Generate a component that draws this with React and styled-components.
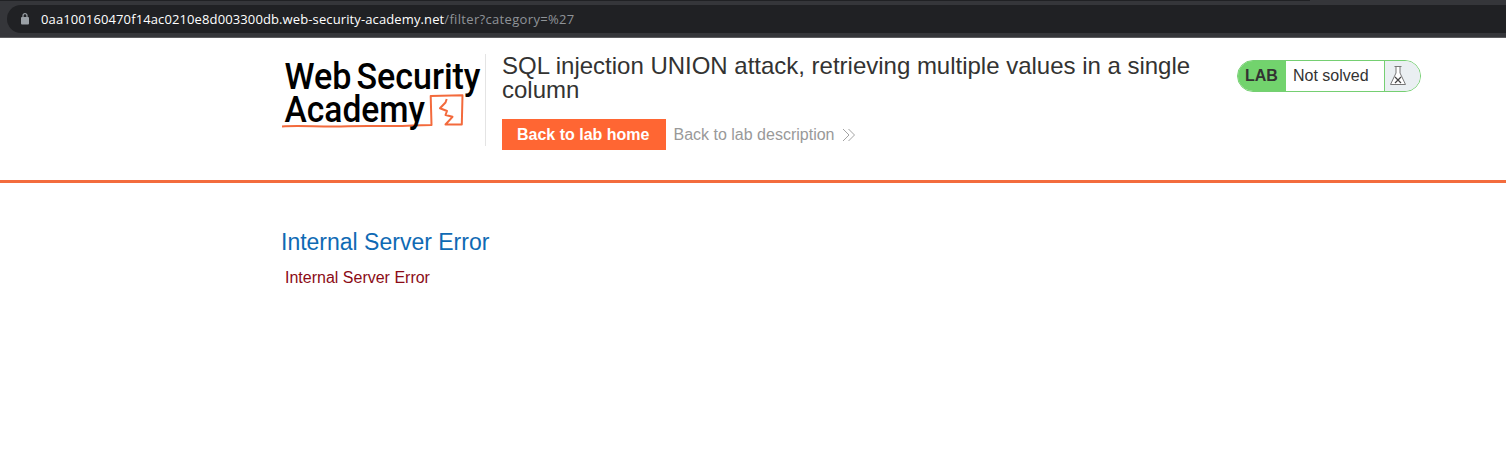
import React from 'react';
import styled, { createGlobalStyle } from 'styled-components';

const GlobalStyle = createGlobalStyle`
  * { box-sizing: border-box; }
  body { margin: 0; background: #fff; font-family: "Liberation Sans", Arial, sans-serif; color: #333332; overflow: hidden; }
  h1, h2, p { margin: 0; font-weight: 400; }
`;

const BrowserBar = styled.div`
  height: 38px;
  padding: 0 0 4px 7px;
  background: #35363a;
  border-bottom: 1px solid #5b5b5e;
`;
const TabEdge = styled.div`
  width: 1310px;
  height: 1px;
  margin: 0 0 4px -7px;
  background: #202124;
`;
const AddressBar = styled.div`
  height: 28px;
  padding-left: 14px;
  display: flex;
  align-items: center;
  background: #202124;
  border-radius: 14px 0 0 14px;
`;
const LockIcon = styled.svg`
  display: block;
  width: 8px;
  height: 12px;
  margin-right: 12px;
`;
const Url = styled.span`
  font-family: "Open Sans", "Noto Sans", sans-serif;
  font-size: 13px;
  line-height: 18px;
  white-space: pre;
  color: ${(p) => (p.$muted ? '#8f9398' : '#fff')};
  letter-spacing: ${(p) => (p.$muted ? '0.33px' : '0.115px')};
`;
const Header = styled.header`
  height: 145px;
  padding: 16px 85px 0 281px;
  display: flex;
  align-items: flex-start;
  border-bottom: 3px solid #f36c3d;
`;
const Logo = styled.svg`
  display: block;
  flex: none;
  width: 204px;
  height: 92px;
  overflow: visible;
`;
const TitleBlock = styled.div`
  height: 92px;
  width: 720px;
  padding-left: 16px;
  border-left: 1px solid #e4e4e4;
`;
const Title = styled.h2`
  font-size: 24px;
  line-height: 24px;
  letter-spacing: -0.01px;
`;
const Actions = styled.div`
  display: flex;
  align-items: center;
  margin-top: 17px;
`;
const HomeButton = styled.a`
  width: 164px;
  height: 31px;
  padding-left: 15px;
  background: #ff6633;
  color: #fff;
  font-size: 16px;
  font-weight: 700;
  line-height: 31px;
`;
const DescriptionLink = styled.a`
  display: flex;
  align-items: center;
  margin-left: 7.5px;
  color: #999;
  font-size: 16px;
  line-height: 31px;
  white-space: nowrap;
`;
const Chevrons = styled.svg`
  width: 14px;
  height: 14px;
  margin-left: 7.5px;
`;
const LabStatus = styled.div`
  width: 184px;
  height: 32px;
  margin: 6px 0 0 auto;
  display: flex;
  border: 1px solid #75cf72;
  border-radius: 16px;
  overflow: hidden;
  font-size: 16px;
  line-height: 30px;
`;
const LabTag = styled.span`
  width: 48px;
  padding-left: 7px;
  background: #72d36d;
  font-weight: 700;
`;
const LabState = styled.span`
  width: 98px;
  padding-left: 7px;
`;
const FlaskCell = styled.span`
  flex: 1;
  padding: 4px 0 0 4px;
  background: #eaeff2;
  border-left: 1px solid #75cf72;
  svg { display: block; }
`;
const Content = styled.main`
  padding: 47px 0 0 281px;
`;
const ErrorTitle = styled.h1`
  color: #0f6ab4;
  font-size: 23px;
  line-height: 24px;
`;
const ErrorText = styled.p`
  margin: 14px 0 0 4px;
  color: #8b0b16;
  font-size: 16px;
  line-height: 19px;
`;

function AcademyLogo() {
  return (
    <Logo viewBox="281 54 204 92" aria-label="Web Security Academy">
      <path
        d="M282 126.500C302 125 322 127.500 348 126.300S390 127 412 125.500L431.500 125L430.700 96L462.500 95.200L461.800 124.500L445.500 124.500L452.500 116.800L445.500 115L447 111L440 108.300L445.500 102.500L446.700 99"
        fill="none"
        stroke="#f36a3c"
        strokeWidth="2"
        strokeLinejoin="round"
      />
      <g fontFamily="Roboto, sans-serif" fontWeight="500" fontSize="37.500" fill="#000">
        <text x="284.500" y="88.500" textLength="67" lengthAdjust="spacingAndGlyphs">Web</text>
        <text x="356.500" y="88.500" textLength="124" lengthAdjust="spacingAndGlyphs">Security</text>
        <text x="284.500" y="121.500" textLength="140.500" lengthAdjust="spacingAndGlyphs">Academy</text>
      </g>
    </Logo>
  );
}

export default function App() {
  return (
    <>
      <GlobalStyle />
      <BrowserBar>
        <TabEdge />
        <AddressBar>
          <LockIcon viewBox="0 0 8 12">
            <path d="M2 5V2.700a2 2 0 0 1 4 0V5" fill="none" stroke="#9aa0a6" strokeWidth="1.200" />
            <rect y="4" width="8" height="7.500" rx="1" fill="#9aa0a6" />
          </LockIcon>
          <Url>0aa100160470f14ac0210e8d003300db.web-security-academy.net</Url>
          <Url $muted>/filter?category=%27</Url>
        </AddressBar>
      </BrowserBar>
      <Header>
        <AcademyLogo />
        <TitleBlock>
          <Title>SQL injection UNION attack, retrieving multiple values in a single column</Title>
          <Actions>
            <HomeButton>Back to lab home</HomeButton>
            <DescriptionLink>
              Back to lab description
              <Chevrons viewBox="0 0 14 14">
                <path d="M1 1L7 7L1 13M6.500 1L12.500 7L6.500 13" fill="none" stroke="#999" strokeWidth="0.900" />
              </Chevrons>
            </DescriptionLink>
          </Actions>
        </TitleBlock>
        <LabStatus>
          <LabTag>LAB</LabTag>
          <LabState>Not solved</LabState>
          <FlaskCell>
            <svg width="17" height="21" viewBox="0 0 17 21" fill="none">
              <path d="M5.500 1.500H12.500M7 1.500V8L1.500 19.500H16.500L11 8V1.500" fill="#fff" stroke="#777" strokeWidth="1" />
              <path d="M6 12L12 18M12 12L6 18" stroke="#444" strokeWidth="1.200" />
            </svg>
          </FlaskCell>
        </LabStatus>
      </Header>
      <Content>
        <ErrorTitle>Internal Server Error</ErrorTitle>
        <ErrorText>Internal Server Error</ErrorText>
      </Content>
    </>
  );
}
